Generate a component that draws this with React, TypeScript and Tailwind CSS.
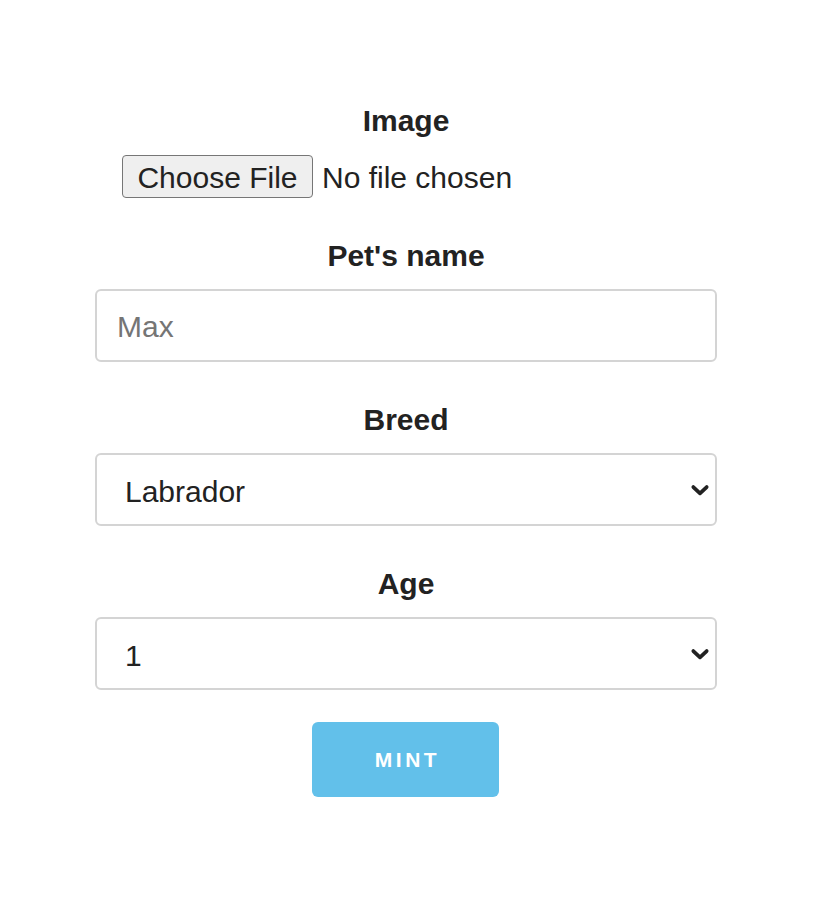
const labelCls =
  "h-[30px] leading-[30px] text-center text-[30px] font-bold text-[#222]";

function Chevron() {
  return (
    <svg
      className="pointer-events-none absolute right-[7px] top-1/2 -translate-y-1/2 w-[20px] h-[20px] text-[#222]"
      viewBox="0 0 24 24"
      fill="none"
      stroke="currentColor"
      strokeWidth={4.5}
      strokeLinecap="round"
      strokeLinejoin="round"
    >
      <path d="M4 8.5l8 7.5 8-7.5" />
    </svg>
  );
}

function SelectBox({ value, options }: { value: string; options: string[] }) {
  return (
    <div className="relative mt-[18px]">
      <select
        defaultValue={value}
        className="appearance-none block w-full h-[73px] rounded-[6px] border-2 border-[#d4d4d4] bg-white pl-[28px] pr-10 pt-[3px] text-[30px] text-[#222] outline-none"
      >
        {options.map((o) => (
          <option key={o}>{o}</option>
        ))}
      </select>
      <Chevron />
    </div>
  );
}

export default function App() {
  return (
    <div className="min-h-[916px] w-full bg-white font-['Liberation_Sans',Arial,sans-serif]">
      <form className="ml-[95px] w-[622px] pt-[106px]">
        <div className={labelCls}>Image</div>
        <div className="mt-[19px] flex items-center pl-[27px] h-[43px]">
          <button
            type="button"
            className="h-[43px] w-[191px] rounded-[4px] border border-[#767676] bg-[#efefef] pt-[2px] text-[30px] text-[#222] leading-none"
          >
            Choose File
          </button>
          <span className="ml-[9px] pt-[2px] text-[30px] text-[#222]">No file chosen</span>
        </div>

        <div className={`${labelCls} mt-[43px]`}>Pet's name</div>
        <input
          placeholder="Max"
          className="mt-[18px] block w-full h-[73px] rounded-[6px] border-2 border-[#d4d4d4] bg-white px-[20px] pt-[3px] text-[30px] text-[#222] placeholder:text-[#757575] outline-none"
        />

        <div className={`${labelCls} mt-[43px]`}>Breed</div>
        <SelectBox value="Labrador" options={["Labrador", "Beagle", "Poodle", "Bulldog"]} />

        <div className={`${labelCls} mt-[43px]`}>Age</div>
        <SelectBox value="1" options={["1", "2", "3", "4", "5"]} />

        <div className="mt-[32px] flex justify-center pr-[1px]">
          <button
            type="button"
            className="h-[75px] w-[187px] rounded-[6px] bg-[#62c0ea] text-white text-[21px] font-bold tracking-[3.5px] pl-[4px]"
          >
            MINT
          </button>
        </div>
      </form>
    </div>
  );
}
